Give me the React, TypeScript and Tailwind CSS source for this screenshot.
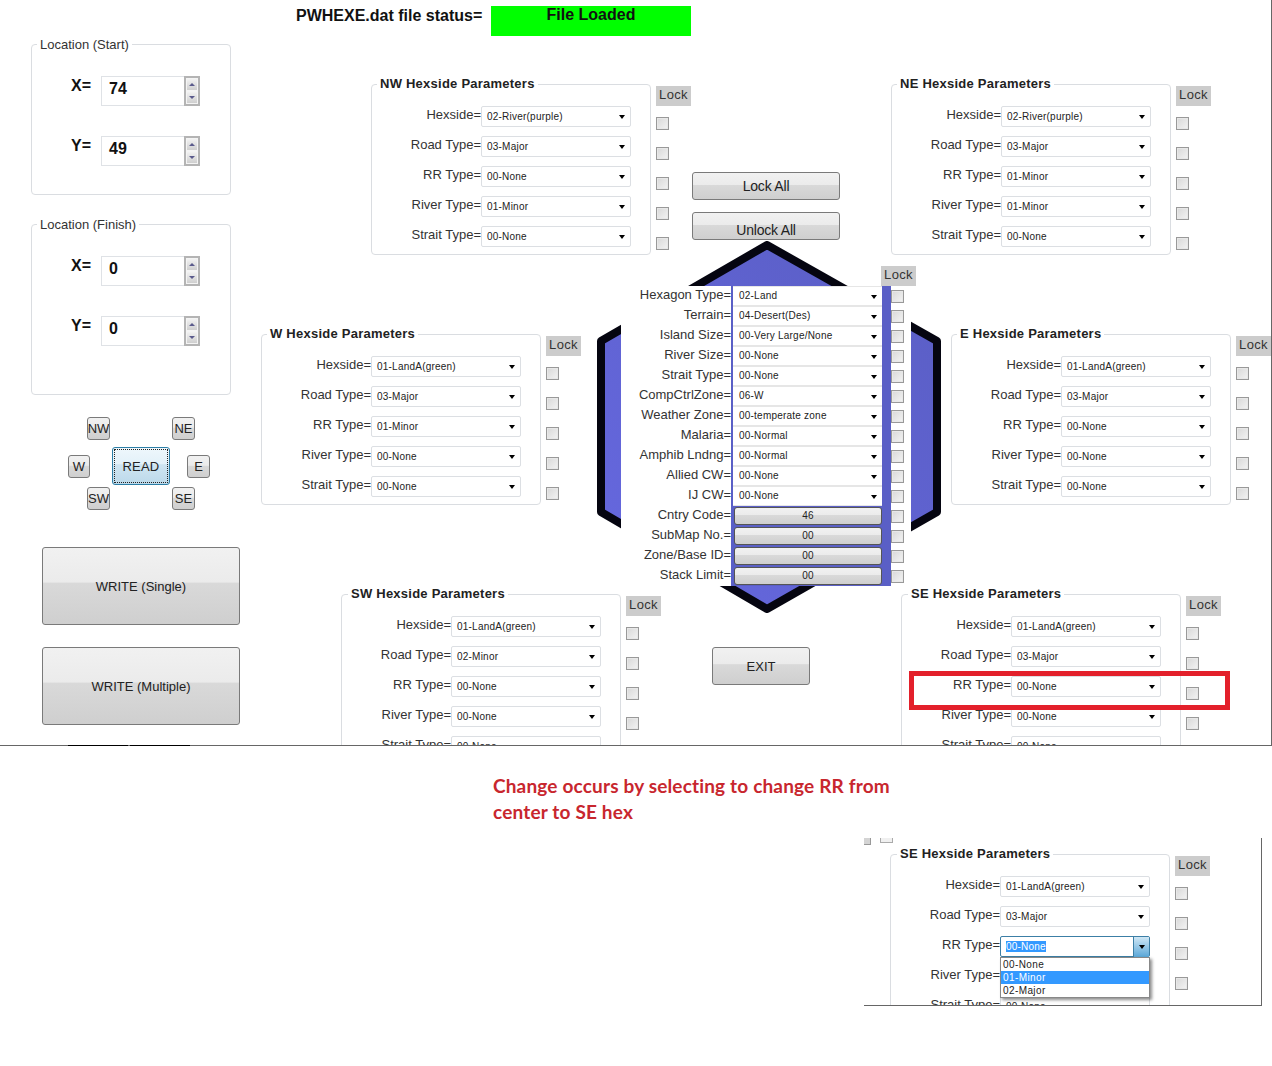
import React from "react";

const rowLabels = ["Hexside=", "Road Type=", "RR Type=", "River Type=", "Strait Type="];

function Arrow() {
  return <span className="ml-auto mr-[5px] w-0 h-0 mt-[2px] border-x-[3.5px] border-x-transparent border-t-[4px] border-t-black shrink-0" />;
}

function Select({ value }: { value: string }) {
  return (
    <div className="flex items-center h-[21px] w-[150px] bg-white border border-[#dcdfe3] rounded-[2px] pl-[5px] pb-px text-[10px] tracking-[0.22px] text-[#222] shrink-0">
      <span>{value}</span>
      <Arrow />
    </div>
  );
}

function Check() {
  return <div className="w-[13px] h-[13px] border border-[#999] bg-[linear-gradient(135deg,#d8d8d8,#f4f4f4)] shadow-[inset_0_0_0_1px_#e8e8e8] shrink-0" />;
}

function Lock() {
  return <div className="w-[35px] h-[20px] pb-[2px] bg-[#cccccc] flex items-center justify-center text-[13px] tracking-[0.35px] text-[#333]">Lock</div>;
}

function HexPanel({ title, values, locks = 5 }: { title: string; values: string[]; locks?: number }) {
  return (
    <div className="flex items-start shrink-0">
      <div className="relative w-[280px] h-[171px] border border-[#dadde1] rounded-[4px] shrink-0">
        <div className={`absolute top-[-9px] bg-white px-[3px] text-[13px] leading-[16px] font-bold tracking-[0.24px] text-[#222] whitespace-nowrap ${title.startsWith("S") ? "left-[6px]" : "left-[5px]"}`}>{title}</div>
        <div className="flex flex-col gap-[9px] pt-[21px]">
          {rowLabels.map((label, i) => (
            <div key={label} className="flex items-center">
              <div className="w-[109px] text-right text-[13px] leading-[16px] -mt-[4px] text-[#333] whitespace-nowrap">{label}</div>
              <Select value={values[i]} />
            </div>
          ))}
        </div>
      </div>
      <div className="ml-[5px] pt-[2px] flex flex-col">
        <Lock />
        <div className="flex flex-col gap-[17px] mt-[11px]">
          {Array.from({ length: locks }).map((_, i) => <Check key={i} />)}
        </div>
      </div>
    </div>
  );
}

const btn = "bg-[linear-gradient(#f1f1f1_0%,#ebebeb_45%,#d9d9d9_46%,#cfcfcf_100%)] border border-[#7a7a7a] rounded-[3px] flex items-center justify-center text-[#222] shrink-0";

function Spin({ value }: { value: string }) {
  return (
    <div className="flex w-[99px] h-[30px] border border-[#dfe2e6]">
      <div className="flex-1 pl-[7px] pb-[5px] flex items-center text-[16px] font-bold text-[#111]">{value}</div>
      <div className="w-[16px] -my-px -mr-px border-2 border-[#b4b4b4] flex flex-col bg-[#e4e4e4]">
        {["up", "down"].map((d) => (
          <div key={d} className="flex-1 flex items-center justify-center border border-[#f4f4f4] bg-[linear-gradient(#f2f2f2,#cfcfcf)]">
            <span className={d === "up" ? "w-0 h-0 border-x-[3px] border-x-transparent border-b-[3px] border-b-[#5b5b8c]" : "w-0 h-0 border-x-[3px] border-x-transparent border-t-[3px] border-t-[#5b5b8c]"} />
          </div>
        ))}
      </div>
    </div>
  );
}

function LocationBox({ title, x, y, className }: { title: string; x: string; y: string; className: string }) {
  return (
    <div className={`relative w-[200px] border border-[#dadde1] rounded-[4px] shrink-0 flex flex-col gap-[30px] pt-[31px] ${className}`}>
      <div className="absolute left-[5px] top-[-8px] bg-white px-[3px] text-[13px] leading-[16px] text-[#333] whitespace-nowrap">{title}</div>
      {[["X=", x], ["Y=", y]].map(([label, value]) => (
        <div key={label} className="flex items-start">
          <div className="w-[69px] pl-[39px] pt-px text-[16px] leading-[18px] font-bold text-[#111] whitespace-nowrap">{label}</div>
          <Spin value={value} />
        </div>
      ))}
    </div>
  );
}

function SmallBtn({ label, className = "w-[23px]" }: { label: string; className?: string }) {
  return <div className={`h-[23px] text-[13px] overflow-hidden ${btn} ${className}`}>{label}</div>;
}

const center: [string, string][] = [
  ["Hexagon Type=", "02-Land"],
  ["Terrain=", "04-Desert(Des)"],
  ["Island Size=", "00-Very Large/None"],
  ["River Size=", "00-None"],
  ["Strait Type=", "00-None"],
  ["CompCtrlZone=", "06-W"],
  ["Weather Zone=", "00-temperate zone"],
  ["Malaria=", "00-Normal"],
  ["Amphib Lndng=", "00-Normal"],
  ["Allied CW=", "00-None"],
  ["IJ CW=", "00-None"],
  ["Cntry Code=", "46"],
  ["SubMap No.=", "00"],
  ["Zone/Base ID=", "00"],
  ["Stack Limit=", "00"],
];

export default function App() {
  return (
    <div className="relative w-[1272px] h-[1066px] bg-white overflow-hidden font-['Liberation_Sans',sans-serif]">
      <div className="relative flex h-[746px] border-b border-r border-[#666] overflow-hidden">
        {/* left column */}
        <div className="w-[261px] shrink-0 pl-[31px] pt-[44px] flex flex-col">
          <LocationBox title="Location (Start)" x="74" y="49" className="h-[151px]" />
          <LocationBox title="Location (Finish)" x="0" y="0" className="h-[171px] mt-[29px]" />
          <div className="mt-[22px] flex flex-col">
            <div className="flex gap-[62px] pl-[56px]"><SmallBtn label="NW" /><SmallBtn label="NE" /></div>
            <div className="flex items-center mt-[7px] pl-[37px]">
              <SmallBtn label="W" className="w-[22px] pt-px" />
              <div className="ml-[22px] w-[58px] h-[38px] border border-[#2c7ea6] rounded-[3px] bg-[linear-gradient(#eef7fc_0%,#e3f1f9_45%,#cfe5f2_46%,#bcd9ea_100%)] p-px shrink-0">
                <div className="w-full h-full pt-px border border-dotted border-[#222] flex items-center justify-center text-[13px] tracking-[0.2px] text-[#222]">READ</div>
              </div>
              <SmallBtn label="E" className="w-[23px] ml-[17px] pt-px" />
            </div>
            <div className="flex gap-[62px] pl-[56px] mt-[2px]"><SmallBtn label="SW" /><SmallBtn label="SE" /></div>
          </div>
          <div className={`ml-[11px] mt-[37px] w-[198px] h-[78px] pt-px text-[13px] ${btn}`}>WRITE (Single)</div>
          <div className={`ml-[11px] mt-[22px] w-[198px] h-[78px] pt-px text-[13px] ${btn}`}>WRITE (Multiple)</div>
        </div>

        {/* right area */}
        <div className="flex-1 flex flex-col">
          <div className="flex h-[36px] pt-[6px] pl-[35px] shrink-0">
            <div className="w-[195px] pt-px text-[16px] leading-[18px] font-bold text-[#111] whitespace-nowrap">PWHEXE.dat file status=</div>
            <div className="w-[200px] h-[30px] bg-[#00ff00] text-center text-[16px] leading-[18px] font-bold text-[#111]">File Loaded</div>
          </div>

          <div className="flex items-start h-[250px] mt-[48px] pl-[110px] shrink-0">
            <HexPanel title="NW Hexside Parameters" values={["02-River(purple)", "03-Major", "00-None", "01-Minor", "00-None"]} />
            <div className="ml-px w-[148px] pt-[88px] flex flex-col gap-[12px] shrink-0">
              <div className={`h-[28px] text-[14px] tracking-[-0.2px] ${btn}`}>Lock All</div>
              <div className={`h-[28px] text-[14px] tracking-[-0.2px] pt-[9px] ${btn}`}>Unlock All</div>
            </div>
            <div className="ml-[51px]">
              <HexPanel title="NE Hexside Parameters" values={["02-River(purple)", "03-Major", "01-Minor", "01-Minor", "00-None"]} />
            </div>
          </div>

          <div className="flex items-start justify-between h-[260px] shrink-0">
            <HexPanel title="W Hexside Parameters" values={["01-LandA(green)", "03-Major", "01-Minor", "00-None", "00-None"]} />
            <HexPanel title="E Hexside Parameters" values={["01-LandA(green)", "03-Major", "00-None", "00-None", "00-None"]} />
          </div>

          <div className="flex items-start pl-[80px] shrink-0">
            <HexPanel title="SW Hexside Parameters" values={["01-LandA(green)", "02-Minor", "00-None", "00-None", "00-None"]} />
            <div className={`ml-[51px] mt-[53px] w-[98px] h-[38px] pt-px text-[13px] ${btn}`}>EXIT</div>
            <div className="ml-[91px]">
              <HexPanel title="SE Hexside Parameters" values={["01-LandA(green)", "03-Major", "00-None", "00-None", "00-None"]} />
            </div>
          </div>
        </div>

        {/* hexagon and the central form lie over the columns */}
        <svg className="absolute left-[590px] top-[235px] blur-[0.5px]" width="360" height="385" viewBox="0 0 360 385">
          <defs>
            <linearGradient id="hexfill" x1="0" y1="1" x2="1" y2="0">
              <stop offset="0" stopColor="#6668e0" />
              <stop offset="1" stopColor="#5a5ec4" />
            </linearGradient>
          </defs>
          <polygon points="177,10 347,106 347,277 177,374 11,277 11,106" fill="url(#hexfill)" stroke="#050510" strokeWidth="8" strokeLinejoin="round" />
        </svg>

        <div className="absolute left-[621px] top-[286px] w-[290px] bg-white flex flex-col">
          {center.map(([label, value], i) => (
            <div key={label} className="flex h-[20px]">
              <div className="w-[110px] pt-px text-right text-[13px] leading-[16px] text-[#333] whitespace-nowrap">{label}</div>
              <div className="w-[160px] bg-[#5a5fc6] pl-[2px] pr-[9px] flex items-center shrink-0">
                {i < 11 ? (
                  <div className="flex items-center h-[20px] w-[149px] bg-white border-y border-y-[#e6e6e6] pl-[6px] pb-px text-[10px] tracking-[0.22px] text-[#222]">
                    <span>{value}</span>
                    <Arrow />
                  </div>
                ) : (
                  <div className={`h-[18px] w-[148px] ml-px pb-px text-[10px] tracking-[0.22px] !border-[#555] ${btn}`}>{value}</div>
                )}
              </div>
              <div className="flex items-center"><Check /></div>
            </div>
          ))}
        </div>
        <div className="absolute left-[881px] top-[266px]"><Lock /></div>

        <div className="absolute left-[909px] top-[671px] w-[321px] h-[39px] border-[5px] border-[#e3202b]" />
      </div>

      <div className="absolute left-[68px] top-[745px] w-[60px] h-px bg-black" />
      <div className="absolute left-[130px] top-[745px] w-[60px] h-px bg-black" />

      <div className="pl-[493px] pt-[27px] text-[19px] leading-[26px] tracking-[0.17px] font-['Lato',sans-serif] font-bold text-[#c8262e]">
        <div>Change occurs by selecting to change RR from</div>
        <div>center to SE hex</div>
      </div>

      <div className="relative ml-[864px] mt-[13px] w-[398px] h-[168px] pl-[26px] pt-[16px] border-b border-r border-[#666] overflow-hidden">
        <div className="absolute left-0 top-0 w-[7px] h-[7px] bg-[#d4d4d4] border-r border-b border-[#999]" />
        <div className="absolute left-[16px] top-0 w-[13px] h-[5px] bg-[#f0f0f0] border-b border-x border-[#aaa]" />
        <HexPanel title="SE Hexside Parameters" values={["01-LandA(green)", "03-Major", "", "", "00-None"]} locks={4} />
        <div className="absolute left-[136px] top-[98px] w-[150px] h-[21px] flex items-center border border-[#3c7fa6] bg-white rounded-[2px] pl-[5px] pb-px text-[10px] tracking-[0.22px] text-white">
          <span className="bg-[#3399ff] leading-[11px]">00-None</span>
          <div className="ml-auto -mb-px w-[16px] h-[20px] bg-[linear-gradient(#cfe7f5,#5aa7d8)] border-l border-[#3c7fa6] flex items-center justify-center">
            <span className="w-0 h-0 border-x-[3.5px] border-x-transparent border-t-[4px] border-t-black" />
          </div>
        </div>
        <div className="absolute left-[136px] top-[119px] w-[150px] h-[41px] bg-white border border-[#888] shadow-[2px_2px_3px_rgba(0,0,0,0.45)] text-[10px] leading-[13px] tracking-[0.4px] text-[#222]">
          <div className="pl-[2px]">00-None</div>
          <div className="pl-[2px] bg-[#3399ff] text-white">01-Minor</div>
          <div className="pl-[2px]">02-Major</div>
        </div>
      </div>
    </div>
  );
}
